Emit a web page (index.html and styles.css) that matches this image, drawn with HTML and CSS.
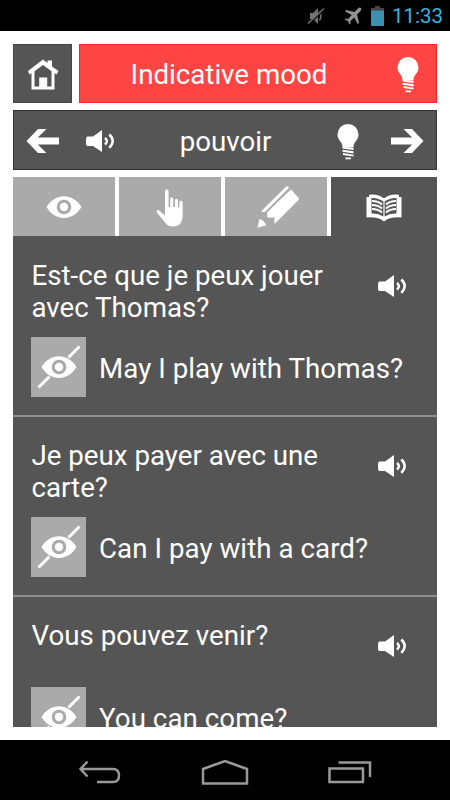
FILE: index.html
```html
<!DOCTYPE html>
<html lang="en">
<head>
<meta charset="utf-8">
<title>Indicative mood</title>
<link rel="stylesheet" href="styles.css">
</head>
<body>
<svg class="defs" aria-hidden="true">
  <symbol id="bulb" viewBox="0 0 24 38">
    <path d="M6.5 24C6.5 18.500 1.500 17.500 1.500 11.500A10.500 10.500 0 0 1 22.500 11.500C22.500 17.500 17.500 18.500 17.500 24Z"/>
    <path d="M6.500 23.800l11 .7v2.500l-11-1.600zM6.500 26.700l11 1.600v2.200l-11-1.700zM7 30l10.500 1.800v1.700l-10.500-1.500zM9.500 34.500h5.500v1.800h-5.500z"/>
  </symbol>
  <symbol id="speaker" viewBox="0 0 30 24">
    <path d="M2.500 7.500H8L17 1v22l-9-6H2.500Q1 17 1 14.500V10Q1 7.500 2.500 7.500z"/>
    <path d="M20 9q3.800 3 0 6.500M24.300 5.500q6.800 6.300 0 13.300" fill="none" stroke="currentColor" stroke-width="2.500"/>
  </symbol>
  <symbol id="eye" viewBox="0 0 36 24">
    <path fill-rule="evenodd" d="M.5 12C9-2.500 27-2.500 35.500 12C27 26.500 9 26.500 .5 12zM10.700 12a7.300 7.300 0 1 0 14.600 0a7.300 7.300 0 1 0-14.600 0z"/>
    <circle cx="18" cy="12" r="4.200"/>
  </symbol>
  <symbol id="eye-off" viewBox="0 0 44 44">
    <path fill-rule="evenodd" d="M4.500 22C13 7.500 31 7.500 39.500 22C31 36.500 13 36.500 4.500 22zM14.700 22a7.300 7.300 0 1 0 14.600 0a7.300 7.300 0 1 0-14.600 0z"/>
    <circle cx="22" cy="22" r="4.200"/>
    <path d="M31.500 12.500L42.500 1.500M12.500 31.500L1.500 42.500" stroke="currentColor" stroke-width="3"/>
  </symbol>
  <symbol id="arrow" viewBox="0 0 34 26">
    <path d="M.5 13L12 1h8.500l-8.700 8.500H33v7H11.800l8.700 8.500H12z"/>
  </symbol>
</svg>

<header class="status">
  <svg class="mute" viewBox="0 0 18 20"><path d="M3 7h3l5-5v16l-5-5H3z"/><path d="M12.500 5.500q3 4 0 9" class="line"/><path d="M1 18.500L17 3.500" stroke="#000" stroke-width="2"/><path d="M1 17.500L17 2.500" class="line"/></svg>
  <svg class="plane" viewBox="0 0 18 18"><path d="M17 1q-1.500-1-3 .5L10.500 5 2 3 .8 4.200 7.800 8 4 12 1.500 11.500 .5 12.500 4 14 5.500 17.500 6.500 16.500 6.500 14 10.200 10.500 13.800 17.200 15 16 13 7.500 16.500 4q1.500-1.500 .5-3z"/></svg>
  <svg class="battery" viewBox="0 0 13 20"><path d="M0 2h4V0h5v2h4v3H0z" fill="#444"/><path d="M0 4.500h13V20H0z" fill="#3c91b3"/></svg>
  <span class="clock">11:33</span>
</header>

<main class="app">
  <div class="top">
    <button class="home" aria-label="Home"><svg viewBox="0 0 32 32"><path d="M1 12L16 .5 20.500 4V1.500H25v6L31.500 12 29.500 15.500 27.500 14V30.500H4.500V14L2.500 15.500zM7.500 12.300V27.500h4.700v-9h8v9h4.300V12.300L16 6z" fill-rule="evenodd"/></svg></button>
    <div class="mood"><h1>Indicative mood</h1><svg class="bulb"><use href="#bulb"/></svg></div>
  </div>

  <nav class="verb">
    <svg class="arrow"><use href="#arrow"/></svg>
    <svg class="speaker"><use href="#speaker"/></svg>
    <h2>pouvoir</h2>
    <svg class="bulb"><use href="#bulb"/></svg>
    <svg class="arrow next"><use href="#arrow"/></svg>
  </nav>

  <div class="tabs">
    <button class="tab"><svg class="eye"><use href="#eye"/></svg></button>
    <button class="tab"><svg class="hand" viewBox="0 0 28 38"><path d="M9 2.500q0-2 1.800-2T12.600 2.500V18h1.600V10q0-1.800 1.500-1.800T17.200 10v8h1.700v-6.500q0-1.700 1.500-1.700t1.500 1.700V18.500h1.500V13.500q0-1.700 1.600-1.700t1.600 1.700V26Q26.600 37.500 17 37.500q-6 0-9-5.500L.8 23.500Q0 20.800 2.500 21L9 26.500z"/></svg></button>
    <button class="tab"><svg class="pencil" viewBox="0 0 42 42"><path d="M.3 41.800L2.500 33Q7.500 34 9 39.500zM4.500 25L29.500 .3 32.500 1.300 8 26H5zM10 26.500L34 3.300 42 12.500 41.500 14 17.500 38V31.500H10.500z"/></svg></button>
    <button class="tab active"><svg class="book" viewBox="0 0 36 28"><path fill-rule="evenodd" d="M.5 3H3V.8Q12-.5 18 4.500Q24-.5 33 .8V3h2.500V23.500Q24 22.500 18 27.500Q12 22.500 .5 23.500zM5.500 4V19.500Q12 19 17.400 22.500V7.500Q12 3.500 5.500 4zM30.500 4Q24 3.500 18.600 7.500V22.500Q24 19 30.500 19.500z"/><path d="M6 7q6 0 10 3.500M6 11q6 0 10 3.500M6 15q6 0 10 3.500M30 7q-6 0-10 3.500M30 11q-6 0-10 3.500M30 15q-6 0-10 3.500" fill="none" stroke="currentColor" stroke-width="2.200"/></svg></button>
  </div>

  <section class="list">
    <article class="item">
      <div class="question"><p>Est-ce que je peux jouer avec Thomas?</p><svg class="speaker"><use href="#speaker"/></svg></div>
      <div class="answer"><button class="toggle" aria-label="Hide"><svg><use href="#eye-off"/></svg></button><p>May I play with Thomas?</p></div>
    </article>
    <article class="item">
      <div class="question"><p>Je peux payer avec une carte?</p><svg class="speaker"><use href="#speaker"/></svg></div>
      <div class="answer"><button class="toggle" aria-label="Hide"><svg><use href="#eye-off"/></svg></button><p>Can I pay with a card?</p></div>
    </article>
    <article class="item">
      <div class="question"><p>Vous pouvez venir?</p><svg class="speaker"><use href="#speaker"/></svg></div>
      <div class="answer"><button class="toggle" aria-label="Hide"><svg><use href="#eye-off"/></svg></button><p>You can come?</p></div>
    </article>
  </section>
</main>

<footer class="navbar">
  <svg viewBox="0 0 44 24"><path d="M9.500 1.500L2.500 9l7 7.500M2.500 9H35q6 0 6 6.500T35 22H19"/></svg>
  <svg class="mid" viewBox="0 0 48 26"><path d="M2 24.500V10L24 2l22 8v14.500z"/></svg>
  <svg viewBox="0 0 44 24"><path d="M1.500 8.500H35V22H1.500zM10.500 2.500H42V17"/></svg>
</footer>
</body>
</html>
```
FILE: styles.css
```css
* { box-sizing: border-box; }
body {
  margin: 0;
  width: 450px;
  height: 800px;
  display: flex;
  flex-direction: column;
  overflow: hidden;
  background: #fff;
  color: #fff;
  font-family: Roboto, sans-serif;
  font-size: 27.7px;
  line-height: 32px;
}
h1, h2, p { margin: 0; font-size: inherit; font-weight: 400; }
button { border: 0; padding: 0; color: inherit; font: inherit; }
svg { display: block; flex: none; fill: currentColor; }
.defs { position: absolute; width: 0; height: 0; }

.status {
  height: 31px;
  flex: none;
  display: flex;
  align-items: center;
  justify-content: flex-end;
  padding: 1px 8px 0 0;
  background: #000;
  color: #33b5e5;
}
.mute { width: 18px; height: 20px; margin-right: 19px; fill: #727272; }
.mute .line { fill: none; stroke: #727272; stroke-width: 1.5; }
.plane { width: 18px; height: 18px; margin-right: 9px; fill: #929292; }
.battery { width: 13px; height: 20px; margin-right: 8px; }
.clock { font-size: 20.5px; width: 50px; text-align: right; }

.app {
  flex: 1;
  min-height: 0;
  padding: 13px;
  display: flex;
  flex-direction: column;
}
.top { display: flex; gap: 7px; height: 59px; flex: none; margin-bottom: 7px; }
.home {
  width: 59px;
  display: flex;
  align-items: center;
  justify-content: center;
  background: #555;
  border: 1px solid #444;
}
.home svg { width: 32px; height: 32px; margin-top: 2px; }
.mood {
  flex: 1;
  display: flex;
  align-items: center;
  background: #f44;
  border: 1px solid #f22;
  padding-right: 16px;
}
.mood h1 { flex: 1; text-align: center; padding: 3px 18px 0 0; }
.mood .bulb { margin-top: 3px; }
.bulb { width: 24px; height: 38px; }
.speaker { width: 30px; height: 24px; }

.verb {
  height: 60px;
  flex: none;
  margin-bottom: 7px;
  display: flex;
  align-items: center;
  padding: 1px 12px 0;
  background: #555;
  border: 1px solid #333;
}
.verb h2 { flex: 1; text-align: center; padding-top: 2px; }
.verb .bulb { margin-top: 2px; }
.arrow { width: 34px; height: 26px; }
.arrow + .speaker { margin-left: 25px; }
.next { transform: scaleX(-1); margin-left: 30px; }

.tabs { height: 59px; flex: none; display: grid; grid-template-columns: 102px 102px 102px 1fr; gap: 4px; }
.tab { display: flex; align-items: center; justify-content: center; background: #aaa; }
.active { background: #555; }
.eye { width: 36px; height: 24px; }
.hand { width: 28px; height: 38px; margin-top: 2px; }
.pencil { width: 42px; height: 42px; margin-left: 4px; }
.book { width: 36px; height: 28px; margin-top: 3px; }

.list { flex: 1; min-height: 0; padding-top: 1px; overflow: hidden; background: #555; }
.item { padding: 19px 15px 18px 18px; border-bottom: 2px solid #8e8e8e; }
.question { display: flex; min-height: 60px; padding: 4px 0 2px; margin-bottom: 11px; }
.question p { width: 315px; padding-left: .5px; }
.question .speaker { margin: 14px 15px 0 auto; }
.answer { display: flex; align-items: center; }
.answer p { padding-top: 3px; letter-spacing: .05px; }
.toggle {
  width: 55px;
  height: 60px;
  margin-right: 13px;
  display: flex;
  align-items: center;
  justify-content: center;
  background: #aaa;
}
.toggle svg { width: 44px; height: 44px; }

.navbar {
  height: 60px;
  flex: none;
  display: flex;
  align-items: center;
  justify-content: space-between;
  padding: 3px 78px 0 78px;
  background: #000;
}
.navbar svg { width: 44px; height: 24px; fill: none; stroke: #999; stroke-width: 2.500; }
.navbar .mid { width: 48px; height: 26px; }
```
